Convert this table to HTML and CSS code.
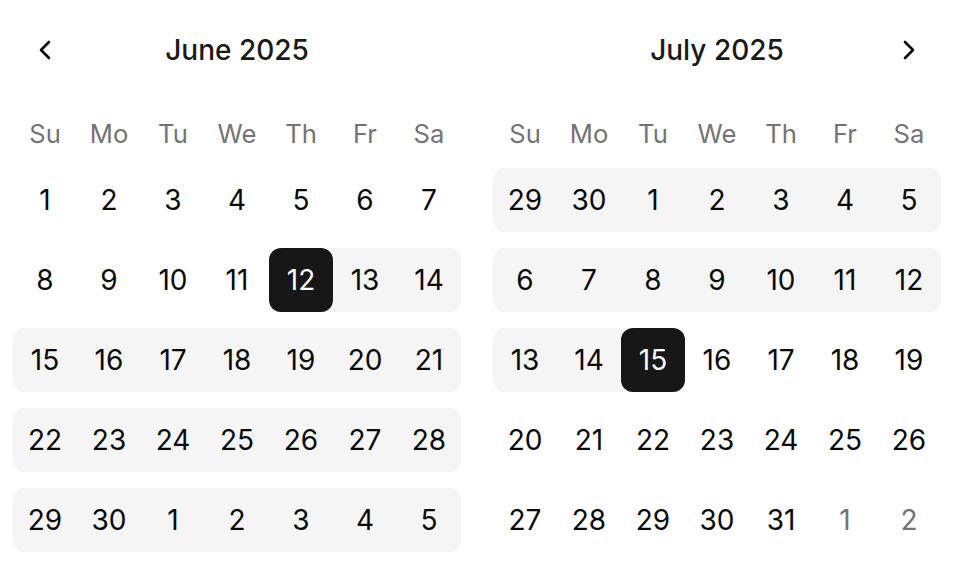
FILE: index.html
```html
<!DOCTYPE html>
<html>
<head>
<meta charset="utf-8">
<link rel="stylesheet" href="styles.css">
</head>
<body>
<div class="months">
  <div class="month">
    <div class="caption">
      <button class="nav" aria-label="Previous month"><svg width="32" height="32" viewBox="0 0 24 24" fill="none" stroke="currentColor" stroke-width="2" stroke-linecap="round" stroke-linejoin="round"><path d="m15 18-6-6 6-6"/></svg></button>
      <div class="title">June 2025</div>
      <div class="spacer"></div>
    </div>
    <div class="weekdays"><span>Su</span><span>Mo</span><span>Tu</span><span>We</span><span>Th</span><span>Fr</span><span>Sa</span></div>
    <div class="weeks">
      <div class="week">
        <div class="day"><span>1</span></div><div class="day"><span>2</span></div><div class="day"><span>3</span></div><div class="day"><span>4</span></div><div class="day"><span>5</span></div><div class="day"><span>6</span></div><div class="day"><span>7</span></div>
      </div>
      <div class="week">
        <div class="day"><span>8</span></div><div class="day"><span>9</span></div><div class="day"><span>10</span></div><div class="day"><span>11</span></div><div class="day range start"><span class="sel">12</span></div><div class="day range"><span>13</span></div><div class="day range end"><span>14</span></div>
      </div>
      <div class="week">
        <div class="day range start"><span>15</span></div><div class="day range"><span>16</span></div><div class="day range"><span>17</span></div><div class="day range"><span>18</span></div><div class="day range"><span>19</span></div><div class="day range"><span>20</span></div><div class="day range end"><span>21</span></div>
      </div>
      <div class="week">
        <div class="day range start"><span>22</span></div><div class="day range"><span>23</span></div><div class="day range"><span>24</span></div><div class="day range"><span>25</span></div><div class="day range"><span>26</span></div><div class="day range"><span>27</span></div><div class="day range end"><span>28</span></div>
      </div>
      <div class="week">
        <div class="day range start"><span>29</span></div><div class="day range"><span>30</span></div><div class="day range"><span>1</span></div><div class="day range"><span>2</span></div><div class="day range"><span>3</span></div><div class="day range"><span>4</span></div><div class="day range end"><span>5</span></div>
      </div>
    </div>
  </div>
  <div class="month">
    <div class="caption">
      <div class="spacer"></div>
      <div class="title">July 2025</div>
      <button class="nav" aria-label="Next month"><svg width="32" height="32" viewBox="0 0 24 24" fill="none" stroke="currentColor" stroke-width="2" stroke-linecap="round" stroke-linejoin="round"><path d="m9 18 6-6-6-6"/></svg></button>
    </div>
    <div class="weekdays"><span>Su</span><span>Mo</span><span>Tu</span><span>We</span><span>Th</span><span>Fr</span><span>Sa</span></div>
    <div class="weeks">
      <div class="week">
        <div class="day range start"><span>29</span></div><div class="day range"><span>30</span></div><div class="day range"><span>1</span></div><div class="day range"><span>2</span></div><div class="day range"><span>3</span></div><div class="day range"><span>4</span></div><div class="day range end"><span>5</span></div>
      </div>
      <div class="week">
        <div class="day range start"><span>6</span></div><div class="day range"><span>7</span></div><div class="day range"><span>8</span></div><div class="day range"><span>9</span></div><div class="day range"><span>10</span></div><div class="day range"><span>11</span></div><div class="day range end"><span>12</span></div>
      </div>
      <div class="week">
        <div class="day range start"><span>13</span></div><div class="day range"><span>14</span></div><div class="day range end"><span class="sel">15</span></div><div class="day"><span>16</span></div><div class="day"><span>17</span></div><div class="day"><span>18</span></div><div class="day"><span>19</span></div>
      </div>
      <div class="week">
        <div class="day"><span>20</span></div><div class="day"><span>21</span></div><div class="day"><span>22</span></div><div class="day"><span>23</span></div><div class="day"><span>24</span></div><div class="day"><span>25</span></div><div class="day"><span>26</span></div>
      </div>
      <div class="week">
        <div class="day"><span>27</span></div><div class="day"><span>28</span></div><div class="day"><span>29</span></div><div class="day"><span>30</span></div><div class="day"><span>31</span></div><div class="day outside"><span>1</span></div><div class="day outside"><span>2</span></div>
      </div>
    </div>
  </div>
</div>
</body>
</html>
```
FILE: styles.css
```css
* { box-sizing: border-box; }
html, body { margin: 0; padding: 0; background: #ffffff; }
body {
  font-family: Inter, "Liberation Sans", sans-serif;
  color: #0a0a0a;
  width: 958px;
  height: 572px;
  overflow: hidden;
}
.months {
  display: flex;
  gap: 32px;
  padding: 18px 0 0 13px;
}
.month {
  width: 448px;
  display: flex;
  flex-direction: column;
}
.caption {
  display: flex;
  align-items: center;
  height: 64px;
}
.nav {
  width: 64px;
  height: 64px;
  border: 0;
  background: transparent;
  padding: 0;
  display: flex;
  align-items: center;
  justify-content: center;
  color: #0a0a0a;
}
.spacer { width: 64px; height: 64px; }
.title {
  flex: 1;
  text-align: center;
  font-size: 28px;
  font-weight: 500;
  color: #1a1a1a;
}
.weekdays {
  display: flex;
  height: 40px;
  margin-top: 31px;
  align-items: center;
}
.weekdays span {
  width: 64px;
  text-align: center;
  font-size: 25.6px;
  color: #737373;
}
.weeks {
  display: flex;
  flex-direction: column;
  gap: 16px;
  margin-top: 15px;
}
.week {
  display: flex;
  height: 64px;
}
.day {
  width: 64px;
  height: 64px;
  display: flex;
  font-size: 28px;
}
.day span {
  flex: 1;
  display: flex;
  align-items: center;
  justify-content: center;
  border-radius: 12px;
}
.day.range { background: #f5f5f5; }
.day.start { border-radius: 12px 0 0 12px; }
.day.end { border-radius: 0 12px 12px 0; }
.day span.sel {
  background: #171717;
  color: #fafafa;
}
.day.outside span { color: #737373; }
```
